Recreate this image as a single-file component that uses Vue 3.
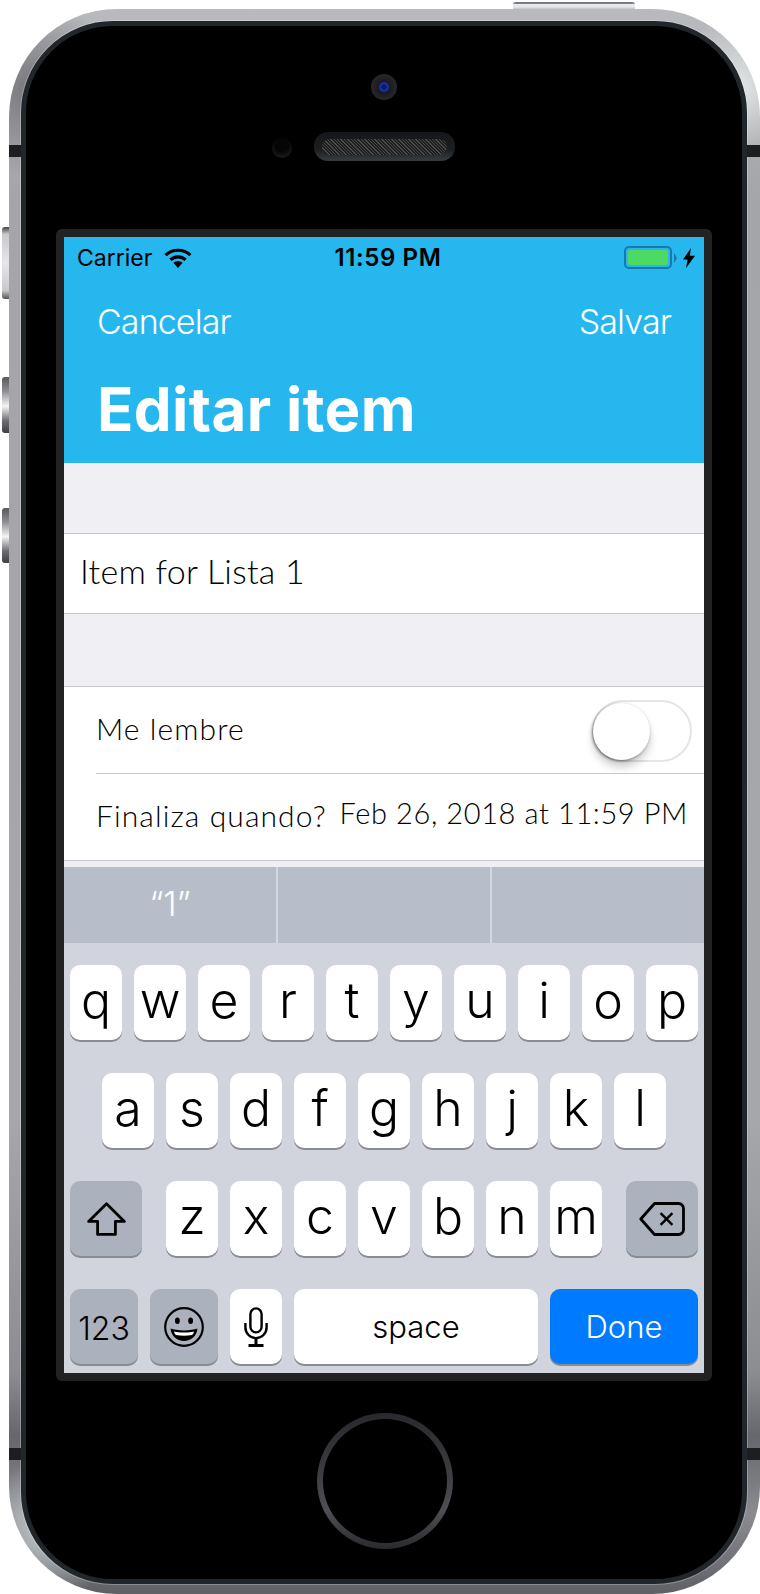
<script setup>
const rowOne = ['q', 'w', 'e', 'r', 't', 'y', 'u', 'i', 'o', 'p']
const rowTwo = ['a', 's', 'd', 'f', 'g', 'h', 'j', 'k', 'l']
const rowThree = ['z', 'x', 'c', 'v', 'b', 'n', 'm']
</script>

<template>
  <div class="stage">
    <div class="side-btn mute"></div>
    <div class="side-btn vol-up"></div>
    <div class="side-btn vol-down"></div>
    <div class="power-btn"></div>

    <div class="phone">
      <span class="band left top"></span>
      <span class="band right top"></span>
      <span class="band left bottom"></span>
      <span class="band right bottom"></span>

      <div class="bezel">
        <div class="earpiece">
          <div class="camera"><span class="lens"></span></div>
          <div class="speaker-row">
            <span class="sensor"></span>
            <div class="speaker"><span class="grille"></span></div>
          </div>
        </div>

        <div class="frame">
          <div class="screen">
            <header class="header">
              <div class="status">
                <div class="status-left">
                  <span>Carrier</span>
                  <svg width="28" height="20" viewBox="0 0 28 20">
                    <path d="M1.6 7.2a18 18 0 0 1 24.8 0" fill="none" stroke="#000" stroke-width="3.2" />
                    <path d="M6.4 11.8a11.2 11.2 0 0 1 15.2 0" fill="none" stroke="#000" stroke-width="3.2" />
                    <path d="M14 20l-4.6-5.2a6.8 6.8 0 0 1 9.2 0z" fill="#000" />
                  </svg>
                </div>
                <span class="time">11:59 PM</span>
                <div class="status-right">
                  <div class="battery"><span class="battery-fill"></span></div>
                  <span class="battery-nub"></span>
                  <svg class="bolt" width="12" height="20" viewBox="0 0 12 20">
                    <path d="M8 0L0 11.5h4.6L3 20l9-12.2H6.8z" fill="#000" />
                  </svg>
                </div>
              </div>
              <div class="nav">
                <span>Cancelar</span>
                <span>Salvar</span>
              </div>
              <h1 class="title">Editar item</h1>
            </header>

            <div class="content">
              <div class="name-row">Item for Lista 1</div>
              <div class="group">
                <div class="row remind">
                  <span>Me lembre</span>
                  <div class="switch"><span class="thumb"></span></div>
                </div>
                <div class="row due">
                  <span class="due-label">Finaliza quando?</span>
                  <span class="due-value">Feb 26, 2018 at 11:59 PM</span>
                </div>
              </div>
            </div>

            <div class="keyboard">
              <div class="suggestions">
                <div class="suggestion">“1”</div>
                <div class="suggestion"></div>
                <div class="suggestion"></div>
              </div>
              <div class="keys">
                <div class="key-row">
                  <div v-for="k in rowOne" :key="k" class="key letter">{{ k }}</div>
                </div>
                <div class="key-row">
                  <div v-for="k in rowTwo" :key="k" class="key letter">{{ k }}</div>
                </div>
                <div class="key-row spread">
                  <div class="key dark wide">
                    <svg width="39" height="34" viewBox="0 0 39 34">
                      <path d="M19.5 1.8L37.4 19.4H28.4V32.4H10.6V19.4H1.6z" fill="none" stroke="#000" stroke-width="2.8" stroke-linejoin="round" />
                    </svg>
                  </div>
                  <div class="letters">
                    <div v-for="k in rowThree" :key="k" class="key letter">{{ k }}</div>
                  </div>
                  <div class="key dark wide">
                    <svg width="46" height="34" viewBox="0 0 46 34">
                      <path d="M15.5 1.5H39.5a5 5 0 0 1 5 5V27.5a5 5 0 0 1-5 5H15.5L1.8 17z" fill="none" stroke="#000" stroke-width="2.8" stroke-linejoin="round" />
                      <path d="M21.6 11.2L33.4 22.8M33.4 11.2L21.6 22.8" fill="none" stroke="#000" stroke-width="2.4" />
                    </svg>
                  </div>
                </div>
                <div class="key-row">
                  <div class="key dark fn numbers">123</div>
                  <div class="key dark fn">
                    <svg width="40" height="40" viewBox="0 0 40 40">
                      <circle cx="20" cy="20" r="18.8" fill="none" stroke="#000" stroke-width="2.2" />
                      <ellipse cx="13.4" cy="13.8" rx="2.4" ry="3.2" fill="#000" />
                      <ellipse cx="26.6" cy="13.8" rx="2.4" ry="3.2" fill="#000" />
                      <path d="M6.6 21.6C12 24 28 24 33.4 21.6C33 29 27 34 20 34S7 29 6.6 21.6z" fill="#000" />
                      <path d="M10 24.4C15 25.8 25 25.8 30 24.4C29.6 26.4 28.8 27.4 28 28C23 29 17 29 12 28C11.2 27.4 10.4 26.4 10 24.4z" fill="#fff" />
                    </svg>
                  </div>
                  <div class="key mic">
                    <svg width="24" height="40" viewBox="0 0 24 40">
                      <rect x="6.4" y="1.4" width="11.2" height="24" rx="5.6" fill="none" stroke="#000" stroke-width="2.4" />
                      <path d="M1.4 16V20.5a10.6 10.6 0 0 0 21.2 0V16" fill="none" stroke="#000" stroke-width="2.4" />
                      <path d="M12 31V37.5M4.5 38.4H19.5" fill="none" stroke="#000" stroke-width="3" />
                    </svg>
                  </div>
                  <div class="key space">space</div>
                  <div class="key done">Done</div>
                </div>
              </div>
            </div>
          </div>
        </div>

        <div class="home"><span class="home-inner"></span></div>
      </div>
    </div>
  </div>
</template>

<style scoped>
.stage {
  position: relative;
  width: 760px;
  height: 1594px;
  overflow: hidden;
  background: #fff;
  font-family: Inter, "Liberation Sans", sans-serif;
}

.phone {
  position: relative;
  box-sizing: border-box;
  width: 751px;
  height: 1585px;
  margin: 9px 0 0 9px;
  padding: 12px 13px 10px 12px;
  border-radius: 108px;
  background:
    radial-gradient(circle at 97% 5%, rgba(235, 240, 240, 0.85), rgba(235, 240, 240, 0) 70px),
    radial-gradient(circle at 5% 96%, rgba(205, 212, 212, 0.85), rgba(205, 212, 212, 0) 70px),
    radial-gradient(circle at 3% 5%, rgba(95, 95, 100, 0.7), rgba(95, 95, 100, 0) 90px),
    linear-gradient(180deg, #b9babd 0, #a4a5a8 12%, #a6a7aa 70%, #8c8d91 86%, #66676c 90%, #8b8c90 95%, #5f6066 100%);
}

.band {
  position: absolute;
  width: 12px;
  height: 12px;
  background: #1c1e20;
}

.band.left {
  left: 0;
}

.band.right {
  right: 0;
  width: 13px;
}

.band.top {
  top: 136px;
}

.band.bottom {
  top: 1439px;
}

.side-btn {
  position: absolute;
  left: 2px;
  width: 7px;
  border-radius: 3px 0 0 3px;
}

.mute {
  top: 227px;
  height: 72px;
  background: linear-gradient(180deg, #444 0, #c9c9cd 10%, #e6e6ea 50%, #c9c9cd 88%, #555 100%);
}

.vol-up {
  top: 377px;
  height: 56px;
  background: linear-gradient(180deg, #58585c 0, #8d8d91 25%, #f4f4f6 52%, #6e6e72 78%, #3e3e42 100%);
}

.vol-down {
  top: 508px;
  height: 55px;
  background: linear-gradient(180deg, #58585c 0, #8d8d91 25%, #f4f4f6 52%, #6e6e72 78%, #3e3e42 100%);
}

.power-btn {
  position: absolute;
  left: 513px;
  top: 2px;
  width: 122px;
  height: 7px;
  border-radius: 3px 3px 0 0;
  background: linear-gradient(180deg, #77777b 0, #77777b 20%, #e8eaef 35%, #e4e6ea 70%, #c4c5c9 100%);
}

.bezel {
  box-sizing: border-box;
  display: flex;
  flex-direction: column;
  align-items: center;
  height: 100%;
  border: 5px solid #20262a;
  border-radius: 92px;
  background: #000;
  box-shadow: 0 0 0 1px rgba(255, 255, 255, 0.25);
}

.earpiece {
  display: flex;
  flex-direction: column;
  align-items: center;
  width: 100%;
  height: 203px;
  padding-top: 48px;
  box-sizing: border-box;
}

.camera {
  display: flex;
  align-items: center;
  justify-content: center;
  width: 26px;
  height: 26px;
  border-radius: 50%;
  background: radial-gradient(circle, #1a1a1f 30%, #26282c 70%, #3a3c40 100%);
}

.lens {
  width: 10px;
  height: 10px;
  border-radius: 50%;
  background: radial-gradient(circle, #0c1a6a 25%, #1b35b8 60%, #0a0f33 100%);
}

.speaker-row {
  display: grid;
  grid-template-columns: 1fr auto 1fr;
  align-items: center;
  width: 100%;
  margin-top: 32px;
}

.sensor {
  justify-self: end;
  width: 20px;
  height: 20px;
  margin: 3px 22px 0 0;
  border-radius: 50%;
  background: radial-gradient(circle at 50% 35%, #050505 40%, #1a1c1e 80%, #2c2e30 100%);
}

.speaker {
  display: flex;
  align-items: center;
  justify-content: center;
  width: 141px;
  height: 29px;
  border-radius: 14px;
  background: linear-gradient(180deg, #15171a 0, #1b1e20 60%, #3a3d40 100%);
}

.grille {
  width: 125px;
  height: 16px;
  border-radius: 8px;
  background: repeating-linear-gradient(45deg, #4a4a4a 0, #4a4a4a 1px, #1e1e1e 1px, #1e1e1e 2.4px);
}

.frame {
  box-sizing: border-box;
  width: 656px;
  height: 1152px;
  border: 8px solid #222;
  border-radius: 6px;
}

.screen {
  display: flex;
  flex-direction: column;
  width: 640px;
  height: 1136px;
  overflow: hidden;
  background: #efeff4;
}

.header {
  height: 226px;
  background: #25b7ee;
}

.status {
  box-sizing: border-box;
  display: grid;
  grid-template-columns: 1fr auto 1fr;
  align-items: center;
  height: 40px;
  padding: 1px 9px 0 13px;
  font-size: 23px;
  color: #000;
}

.status-left {
  display: flex;
  align-items: center;
  gap: 12px;
}

.time {
  margin-left: 4px;
  font-size: 24px;
  font-weight: 600;
  letter-spacing: 0.6px;
}

.status-right {
  display: flex;
  align-items: center;
  justify-content: flex-end;
}

.battery {
  box-sizing: border-box;
  width: 48px;
  height: 23px;
  padding: 2px;
  border: 2px solid #1b78a8;
  border-radius: 5px;
}

.battery-fill {
  display: block;
  height: 100%;
  border-radius: 2px;
  background: #4cd964;
}

.battery-nub {
  width: 0;
  height: 0;
  margin: 0 6px 0 2px;
  border-top: 5px solid transparent;
  border-bottom: 5px solid transparent;
  border-left: 3px solid #1b78a8;
}

.nav {
  display: flex;
  align-items: center;
  justify-content: space-between;
  height: 88px;
  padding: 0 33px;
  font-size: 34px;
  font-weight: 300;
  letter-spacing: -0.9px;
  color: #fff;
}

.title {
  margin: 0;
  padding: 0 0 0 33px;
  font-size: 60px;
  font-weight: 700;
  letter-spacing: 0.4px;
  line-height: 88px;
  color: #fff;
}

.content {
  flex: 1;
  padding-top: 70px;
  font-family: Lato, "Liberation Sans", sans-serif;
  font-weight: 300;
  color: #000;
}

.name-row {
  box-sizing: border-box;
  display: flex;
  align-items: center;
  height: 81px;
  padding: 0 0 6px 16px;
  border-top: 1px solid #c8c7cc;
  border-bottom: 1px solid #c8c7cc;
  background: #fff;
  font-size: 34px;
  letter-spacing: 0.25px;
}

.group {
  margin-top: 72px;
  border-top: 1px solid #c8c7cc;
  border-bottom: 1px solid #c8c7cc;
  background: #fff;
}

.row {
  display: flex;
  align-items: center;
  justify-content: space-between;
  margin-left: 32px;
  padding-right: 12px;
  font-size: 30px;
}

.remind {
  height: 86px;
  border-bottom: 1px solid #c8c7cc;
  letter-spacing: 1.1px;
}

.remind > span:first-child {
  margin-bottom: 4px;
}

.due {
  height: 86px;
  padding-right: 16px;
}

.due-label {
  margin-bottom: 4px;
  letter-spacing: 1.1px;
}

.due-value {
  margin-bottom: 10px;
  font-size: 29px;
  letter-spacing: 0.6px;
}

.switch {
  display: flex;
  align-items: center;
  box-sizing: border-box;
  width: 100px;
  height: 62px;
  margin-top: 2px;
  border: 2.5px solid #e5e5e5;
  border-radius: 31px;
  background: #fff;
}

.thumb {
  width: 57px;
  height: 57px;
  margin-left: -1.5px;
  border-radius: 50%;
  background: #fff;
  box-shadow: 0 7px 9px rgba(0, 0, 0, 0.2), -1px 1px 3px rgba(0, 0, 0, 0.45);
}

.keyboard {
  height: 506px;
  background: #d1d4dc;
}

.suggestions {
  display: flex;
  gap: 2px;
  height: 76px;
  background: #d5d8df;
}

.suggestion {
  flex: 1;
  display: flex;
  align-items: center;
  justify-content: center;
  padding-bottom: 4px;
  box-sizing: border-box;
  background: #b8bec9;
  font-size: 34px;
  font-weight: 300;
  color: #fff;
}

.keys {
  display: flex;
  flex-direction: column;
  gap: 33px;
  padding: 22px 6px 8px;
}

.key-row {
  display: flex;
  justify-content: center;
  gap: 12px;
  height: 75px;
}

.key-row.spread {
  justify-content: space-between;
  gap: 0;
}

.letters {
  display: flex;
  gap: 12px;
}

.key {
  box-sizing: border-box;
  display: flex;
  align-items: center;
  justify-content: center;
  flex: none;
  width: 52px;
  height: 75px;
  border-radius: 10px;
  background: #fff;
  box-shadow: 0 2px 0 #888b92;
  color: #000;
}

.letter {
  padding-bottom: 6px;
  font-size: 50px;
  font-weight: 300;
}

.dark {
  background: #abb2bd;
}

.wide {
  width: 72px;
}

.fn {
  width: 68px;
}

.numbers {
  padding-top: 3px;
  font-size: 32px;
  font-weight: 300;
}

.space {
  width: 244px;
  font-size: 31px;
  font-weight: 300;
}

.done {
  width: 148px;
  background: #007aff;
  font-size: 31px;
  font-weight: 300;
  color: #fff;
}

.home {
  box-sizing: border-box;
  width: 136px;
  height: 136px;
  margin: 32px 0 0 2px;
  padding: 6px;
  border-radius: 50%;
  background: linear-gradient(180deg, #29292d 0, #3a3a3f 40%, #4e4e54 72%, #2a2a2e 100%);
}

.home-inner {
  display: block;
  height: 100%;
  border-radius: 50%;
  background: #000;
}
</style>

<style>
html,
body {
  margin: 0;
  background: #fff;
}
</style>
